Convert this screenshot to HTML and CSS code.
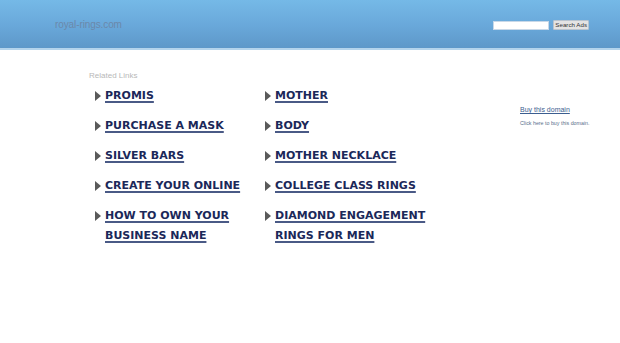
FILE: index.html
```html
<!DOCTYPE html>
<html>
<head>
<meta charset="utf-8">
<link rel="stylesheet" href="styles.css">
</head>
<body>
<div class="header">
  <div class="domain">royal-rings.com</div>
  <form class="search">
    <input class="search-input" type="text">
    <button class="search-btn" type="button">Search Ads</button>
  </form>
</div>
<div class="main">
  <div class="links">
    <div class="related">Related Links</div>
    <div class="grid">
      <a class="item" href="#"><span class="arrow"></span><span class="txt">PROMIS</span></a>
      <a class="item" href="#"><span class="arrow"></span><span class="txt">MOTHER</span></a>
      <a class="item" href="#"><span class="arrow"></span><span class="txt">PURCHASE A MASK</span></a>
      <a class="item" href="#"><span class="arrow"></span><span class="txt">BODY</span></a>
      <a class="item" href="#"><span class="arrow"></span><span class="txt">SILVER BARS</span></a>
      <a class="item" href="#"><span class="arrow"></span><span class="txt">MOTHER NECKLACE</span></a>
      <a class="item" href="#"><span class="arrow"></span><span class="txt">CREATE YOUR ONLINE</span></a>
      <a class="item" href="#"><span class="arrow"></span><span class="txt">COLLEGE CLASS RINGS</span></a>
      <a class="item" href="#"><span class="arrow"></span><span class="txt">HOW TO OWN YOUR BUSINESS NAME</span></a>
      <a class="item" href="#"><span class="arrow"></span><span class="txt">DIAMOND ENGAGEMENT RINGS FOR MEN</span></a>
    </div>
  </div>
  <div class="side">
    <a class="buy" href="#">Buy this domain</a>
    <div class="click">Click here to buy this domain.</div>
  </div>
</div>
</body>
</html>
```
FILE: styles.css
```css
html, body {
  margin: 0;
  padding: 0;
  background: #fff;
  font-family: "Liberation Sans", Arial, sans-serif;
}
.header {
  height: 48px;
  background: linear-gradient(to bottom, #75b9e7 0%, #6aa9db 50%, #5e98c9 100%);
  border-bottom: 2px solid #b4d4ec;
  display: flex;
  align-items: center;
  justify-content: space-between;
  padding: 0 31px 0 55px;
}
.domain {
  font-size: 10px;
  color: #6b88aa;
  margin-top: 0;
  letter-spacing: -0.1px;
}
.search {
  display: flex;
  align-items: center;
  gap: 4px;
  margin: 2px 0 0 0;
}
.search-input {
  width: 54px;
  height: 7px;
  border: 1px solid #c8d8e8;
  padding: 0;
  margin: 0;
  background: #fff;
}
.search-btn {
  height: 10px;
  padding: 0 1px;
  margin: 0;
  white-space: nowrap;
  font-family: "Liberation Sans", Arial, sans-serif;
  font-size: 6.2px;
  line-height: 8px;
  color: #333;
  background: #e3e3e3;
  border: 1px solid #b8c4cf;
  border-radius: 1px;
}
.main {
  display: flex;
  padding: 20px 0 0 89px;
}
.links {
  width: 431px;
}
.related {
  font-size: 8px;
  color: #b8b8b8;
  height: 12px;
  line-height: 12px;
}
.grid {
  display: grid;
  grid-template-columns: 170px 170px;
  padding-left: 6px;
  margin-top: 4px;
  row-gap: 10px;
}
.item {
  display: flex;
  align-items: flex-start;
  text-decoration: none;
}
.arrow {
  flex: none;
  width: 0;
  height: 0;
  border-top: 5px solid transparent;
  border-bottom: 5px solid transparent;
  border-left: 6px solid #5a5a5a;
  margin-top: 5px;
  margin-right: 4px;
}
.txt {
  font-family: "DejaVu Sans", Verdana, sans-serif;
  font-weight: bold;
  font-size: 11px;
  line-height: 20px;
  color: #1b2859;
  text-decoration: underline;
  text-decoration-thickness: 2px;
  text-underline-offset: 2px;
  text-decoration-color: #4a5a86;
}
.side {
  padding-top: 35px;
  display: flex;
  flex-direction: column;
}
.buy {
  font-size: 7px;
  color: #3c5e90;
  text-decoration: underline;
  line-height: 10px;
}
.click {
  font-size: 5.3px;
  color: #5a6e8c;
  margin-top: 4px;
  line-height: 8px;
}
```
